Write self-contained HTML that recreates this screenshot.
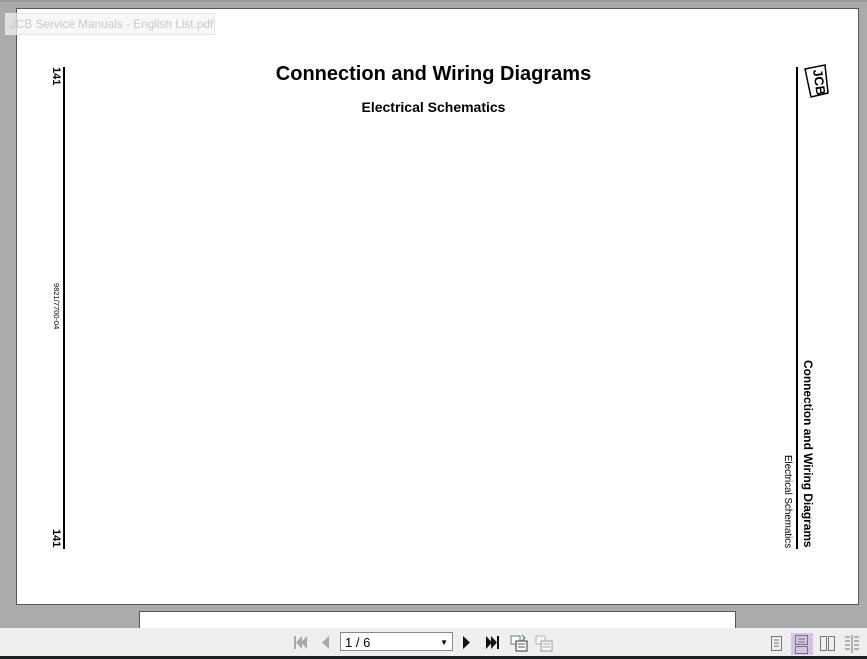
<!DOCTYPE html>
<html><head><meta charset="utf-8"><style>
body{margin:0;width:867px;height:659px;overflow:hidden;background:#ababab;font-family:"Liberation Sans",Arial,sans-serif;position:relative}
.a{position:absolute}
.page{left:16px;top:8px;width:841px;height:595px;background:#fff;border:1px solid #555}
.p2{left:139px;top:611px;width:595px;height:20px;background:#fff;border:1px solid #555}
.tb{left:0;top:628px;width:867px;height:28px;background:#efefef}
.bot{left:0;top:656px;width:867px;height:3px;background:#1a1f24}
.v{writing-mode:vertical-rl;white-space:nowrap;color:#000}
</style></head><body>
<div class="a" style="left:0;top:0;width:867px;height:2px;background:#9a9a9a"></div>
<div class="a page"></div>
<div class="a" style="left:5px;top:13px;width:204px;height:20px;background:rgba(245,245,245,.7);border:1px solid #e4e4e4;color:#c8c8c8;line-height:20px;padding-left:4px;font-size:11.8px;white-space:nowrap;overflow:hidden">JCB Service Manuals - English List.pdf</div>
<div class="a" style="left:0;top:63px;width:867px;text-align:center;font-weight:bold;font-size:20px">Connection and Wiring Diagrams</div>
<div class="a" style="left:0;top:99px;width:867px;text-align:center;font-weight:bold;font-size:14px">Electrical Schematics</div>
<div class="a" style="left:63px;top:67px;width:2px;height:482px;background:#000"></div>
<div class="a" style="left:796px;top:67px;width:2px;height:482px;background:#000"></div>
<div class="a v" style="left:50px;top:67px;font-weight:bold;font-size:11px">141</div>
<div class="a v" style="left:50px;top:529px;font-weight:bold;font-size:11px">141</div>
<div class="a v" style="left:52px;top:283px;font-size:7.5px">9821/7700-04</div>
<div class="a v" style="left:801px;top:360px;font-weight:bold;font-size:11.9px">Connection and Wiring Diagrams</div>
<div class="a v" style="left:782px;top:455px;font-size:9.8px">Electrical Schematics</div>
<svg class="a" style="left:803px;top:64px" width="26" height="36" viewBox="0 0 26 36">
<polygon points="2,5 22,1 25,29 8,33" fill="#fff" stroke="#000" stroke-width="1.5"/>
<text x="0" y="0" transform="translate(10,6) rotate(82)" font-family="Liberation Sans" font-weight="bold" font-size="13" fill="#000">JCB</text></svg>
<div class="a p2"></div>
<div class="a tb"></div>
<div class="a bot"></div>
<svg class="a" style="left:290px;top:633px" width="270" height="20">
<g fill="#a8a8a8"><rect x="4" y="3" width="2" height="13"/><polygon points="12,3 6,9.5 12,16"/><polygon points="17,3 11,9.5 17,16"/><polygon points="39,3 32,9.5 39,16"/></g>
<g fill="#111"><polygon points="173,3 180,9.5 173,16"/><polygon points="196,3 202,9.5 196,16"/><polygon points="201,3 207,9.5 201,16"/><rect x="207" y="3" width="2" height="13"/></g>
<g><rect x="221" y="3" width="9" height="8" fill="#fff" stroke="#5a7b99"/><rect x="226" y="8" width="11" height="10" fill="#fff" stroke="#333"/><path d="M228 11h7M228 14h7" stroke="#555"/><path d="M232 2l3 3-3 3" stroke="#2a8a2a" fill="none"/></g>
<g opacity=".45"><rect x="246" y="3" width="9" height="8" fill="#fff" stroke="#5a7b99"/><rect x="251" y="8" width="11" height="10" fill="#fff" stroke="#333"/><path d="M253 11h7M253 14h7" stroke="#555"/></g>
</svg>
<div class="a" style="left:340px;top:632px;width:113px;height:19px;background:#fff;border:1px solid #888;font-size:13px;line-height:19px;padding-left:4px;box-sizing:border-box">1 / 6<span style="position:absolute;right:4px;font-size:8px">&#9660;</span></div>
<div class="a" style="left:791px;top:633px;width:22px;height:22px;background:#d9c2ea"></div>
<svg class="a" style="left:768px;top:634px" width="95" height="20" fill="none" stroke="#777">
<rect x="3.5" y="2.5" width="10" height="14"/><path d="M6 6h5M6 9h5M6 12h5"/>
<rect x="27.5" y="1.5" width="12" height="9"/><rect x="27.5" y="12.5" width="12" height="7"/><path d="M30 5h7M30 8h7"/>
<rect x="52.5" y="2.5" width="6" height="14"/><rect x="60.5" y="2.5" width="6" height="14"/>
<path d="M77 3h5M77 7h5M77 11h5M77 15h5M86 3h5M86 7h5M86 11h5M86 15h5M84 1v18"/>
</svg>
</body></html>
